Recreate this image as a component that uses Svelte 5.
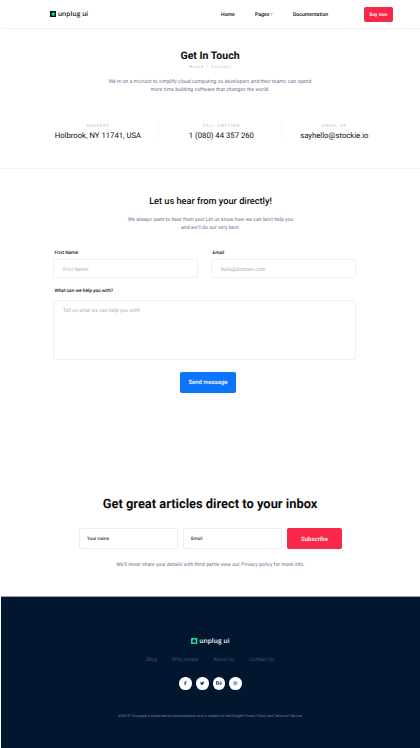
<script>
  const contacts = [
    { label: 'ADDRESS', value: 'Holbrook, NY 11741, USA' },
    { label: 'CALL ANYTIME', value: '1 (080) 44 357 260' },
    { label: 'EMAIL US', value: 'sayhello@stockie.io' }
  ];
  const links = ['Blog', 'Why simple', 'About Us', 'Contact Us'];
</script>

{#snippet logo(outer, inner)}
  <svg class="mark" viewBox="0 0 12 12" aria-hidden="true">
    <rect width="12" height="12" fill={outer} />
    <path d="M4.4 2.900h3.200l1.500 1.500v3.200L7.600 9.100H4.400L2.900 7.600V4.400z" fill={inner} />
    <circle cx="6" cy="6" r="1.1" fill={outer} opacity=".25" />
  </svg>
{/snippet}

<div class="page">
  <header>
    <a class="logo" href="#home">{@render logo('#07130f', '#14e08d')}<span>unplug ui</span></a>
    <nav>
      <a class="home" href="#home">Home</a>
      <a class="pages" href="#pages">Pages<svg viewBox="0 0 6 4"><path d="M1 1l2 2 2-2" fill="none" stroke="#222" stroke-width="1.1" /></svg></a>
      <a class="docs" href="#docs">Documentation</a>
    </nav>
    <button class="buy">Buy now</button>
  </header>

  <section class="hero">
    <h1>Get In Touch</h1>
    <div class="crumbs">Home / Contact</div>
    <p>We're on a mission to simplify cloud computing so developers and their teams can spend<br />more time building software that changes the world.</p>
    <div class="contacts">
      {#each contacts as c}
        <div class="contact"><small>{c.label}</small><strong>{c.value}</strong></div>
      {/each}
    </div>
  </section>

  <section class="form">
    <h2>Let us hear from your directly!</h2>
    <p>We always want to hear from you! Let us know how we can best help you<br />and we'll do our very best.</p>
    <form>
      <div class="row">
        <label><span>Frist Name:</span><div class="field">Frist Name:</div></label>
        <label><span>Email</span><div class="field">hello@domain.com</div></label>
      </div>
      <label class="message"><span>What can we help you with?</span><div class="field area">Tell us what we can help you with!</div></label>
    </form>
    <button class="send">Send message</button>
  </section>

  <section class="news">
    <h2>Get great articles direct to your inbox</h2>
    <div class="signup">
      <div class="input">Your name</div>
      <div class="input">Email</div>
      <button>Subscribe</button>
    </div>
    <p>We'll never share your details with third partie view our Privacy policy for more info.</p>
  </section>

  <footer>
    <a class="logo" href="#home">{@render logo('#14e08d', '#031730')}<span>unplug ui</span></a>
    <div class="links">
      {#each links as l}<a href="#{l}">{l}</a>{/each}
    </div>
    <div class="social">
      <i><svg viewBox="0 0 16 16"><path d="M6 15V9H4V6h2V4.500C6 2 7.500 1 9.500 1H12v3h-1.700C9.300 4 9 4.400 9 5v1h3l-.5 3H9v6z" /></svg></i>
      <i><svg viewBox="0 0 24 24"><path d="M23 5c-.8.4-1.700.6-2.600.8.9-.6 1.600-1.500 2-2.500-.9.500-1.900.9-2.900 1.100A4.600 4.600 0 0 0 11.600 8.600C7.800 8.400 4.500 6.600 2.200 3.800c-1.200 2-.6 4.800 1.400 6.100-.7 0-1.400-.2-2-.6 0 2.200 1.500 4.200 3.700 4.600-.7.200-1.400.2-2.100.1.600 1.800 2.300 3.100 4.300 3.200A9.200 9.200 0 0 1 .7 19 13 13 0 0 0 20.800 7.400C21.700 6.700 22.400 5.900 23 5z" /></svg></i>
      <i><svg class="be" viewBox="0 0 24 16"><path fill-rule="evenodd" d="M0 1h7c3 0 4.500 1.300 4.500 3.500 0 1.500-.7 2.500-2 3.100 1.800.5 2.700 1.800 2.700 3.500C12.200 13.700 10 15 7.300 15H0zM3 3.500v3h3.200c1.400 0 2.200-.4 2.200-1.500S7.600 3.500 6.300 3.500zm0 5.300v3.700h3.600c1.500 0 2.400-.6 2.400-1.900S8.100 8.800 6.600 8.800zM15.500 2h6v1.500h-6zM24 11h-7.500c.2 2.200 3.500 2.600 4.500.7h2.700c-1.500 5-10.200 4.200-10.200-1.700C13.500 3 24.500 3 24 11zm-7.400-2h4.500c-.3-2.300-4.100-2.300-4.500 0z" /></svg></i>
      <i><svg viewBox="0 0 16 16"><g fill="none" stroke="#25357c" stroke-width="1.300"><circle cx="8" cy="8" r="6.500" /><path d="M5.500 2c3 3 4.500 7 5 12M2 7c5 .2 9-.8 11-3M4 13c2-4 6-5.500 10.300-4" /></g></svg></i>
    </div>
    <p>©2019 This page is protected by bootstrapdash and is subject to the Google Privacy Policy and Terms of Service.</p>
  </footer>
</div>

<style>
  :global(body) { margin: 0; background: #fff; }
  .page { width: 420px; height: 748px; box-sizing: border-box; padding-left: 1px; overflow: hidden; font-family: Roboto, sans-serif; color: #0d0d0d; background: #fff; text-align: center; display: flex; flex-direction: column; text-rendering: geometricPrecision; }
  h1, h2, p { margin: 0; white-space: nowrap; }
  a { color: inherit; text-decoration: none; white-space: nowrap; }
  button { border: 0; padding: 0; font-family: inherit; color: #fff; border-radius: 2px; text-rendering: geometricPrecision; }
  header { height: 28px; flex: none; border-bottom: 1px solid #f3f3f3; display: flex; align-items: center; padding: 0 27px 0 49px; }
  .logo { display: flex; align-items: center; gap: 1.500px; font: 600 6.500px/8px "Open Sans", sans-serif; letter-spacing: .1px; }
  .mark { width: 6.400px; height: 6.400px; display: block; }
  nav { display: flex; margin-left: auto; font-size: 5.150px; line-height: 8px; font-weight: 500; padding-top: 2px; }
  .home { width: 34px; text-align: left; }
  .pages { width: 38px; text-align: left; }
  .pages svg { width: 3px; height: 2px; margin-left: 1px; vertical-align: 1px; }
  .docs { width: 71px; text-align: left; }
  .buy { width: 29px; height: 15px; background: #f9284a; font-size: 4.800px; font-weight: 500; padding-top: 2px; }
  .hero { height: 120px; flex: none; border-bottom: 1px solid #f1f1f1; padding-top: 19px; }
  h1 { font-size: 10.500px; line-height: 16px; font-weight: 700; margin-right: 1px; }
  .crumbs { font-size: 4.200px; line-height: 6px; letter-spacing: .95px; color: #bdbdbd; padding-top: 1px; }
  p { font-size: 5.150px; line-height: 8.400px; color: #6c7393; }
  .hero p { margin: 7px 1px 0 0; }
  .contacts { display: flex; margin: 25px 33px 0 36.400px; height: 23px; }
  .contact { width: 121px; display: flex; flex-direction: column; padding-top: 4px; box-sizing: border-box; white-space: nowrap; }
  .contact:nth-child(2) { width: 123px; padding-left: 2px; }
  .contact:nth-child(3) { width: 105px; }
  .contact + .contact { border-left: 1px solid #fafafa; }
  .contact small { font-size: 4.200px; line-height: 5px; letter-spacing: .75px; color: #bdbdbd; }
  .contact strong { font-size: 7.720px; line-height: 13px; font-weight: 400; }
  .form { height: 318px; flex: none; padding-top: 26px; box-sizing: border-box; }
  .form h2 { font-size: 9.200px; line-height: 14px; font-weight: 500; }
  .form p { margin-top: 7px; }
  form { width: 303px; margin: 17px 0 0 52px; text-align: left; }
  .row { display: flex; gap: 13px; }
  label { display: block; width: 145px; font-size: 4.750px; font-weight: 500; line-height: 8px; }
  label span { display: block; padding-left: 1.500px; }
  .field { box-sizing: border-box; height: 19px; margin-top: 1px; border: 1px solid #eef0f6; border-radius: 2px; padding: 1px 9px 0; font-size: 5.150px; font-weight: 400; line-height: 18px; color: #b0b0b0; }
  .message { width: 303px; margin-top: 10px; }
  .area { height: 60px; margin-top: 4px; }
  .send { display: block; width: 56px; height: 21px; margin: 12px 0 0 179px; background: #0b75fc; font-size: 5.950px; font-weight: 500; padding-top: 1px; }
  .news { height: 109px; flex: none; }
  .news h2 { font-size: 12.880px; line-height: 18px; font-weight: 700; padding-top: 9px; margin-right: 1px; }
  .signup { display: flex; gap: 5px; margin: 14px 0 0 78px; height: 21px; }
  .input { width: 99px; box-sizing: border-box; border: 1px solid #e9edf5; border-radius: 2px; text-align: left; padding: 1px 0 0 7px; line-height: 19px; font-size: 4.600px; font-weight: 500; color: #30374e; }
  .signup button { width: 55px; background: #f9284a; font-size: 6px; font-weight: 500; padding-top: 1px; }
  .news p { margin-top: 12px; }
  footer { flex: 1; background: #02162f; border-top: 1px solid #9ba4ae; display: flex; flex-direction: column; align-items: center; }
  footer .logo { color: #fff; margin-top: 40px; }
  .links { display: flex; gap: 15px; font-size: 5.150px; line-height: 8px; color: #44506f; margin-top: 11px; }
  .social { display: flex; gap: 4px; margin-top: 13px; }
  .social i { width: 12.600px; height: 12.600px; border-radius: 50%; background: #fff; display: flex; align-items: center; justify-content: center; }
  .social svg { width: 4.500px; height: 4.500px; fill: #25357c; }
  .social .be { width: 6px; height: 4px; }
  footer p { font-size: 3.700px; line-height: 6px; color: #738099; margin-top: 23px; }
</style>
